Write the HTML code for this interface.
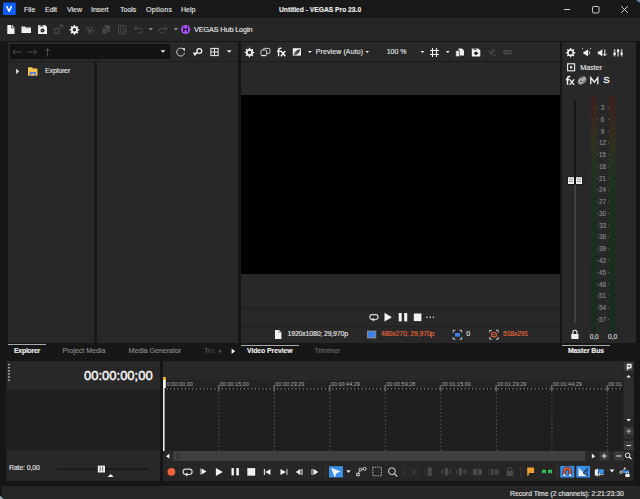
<!DOCTYPE html>
<html><head><meta charset="utf-8">
<style>
*{margin:0;padding:0;box-sizing:border-box}
html,body{width:640px;height:499px;overflow:hidden;background:#161616;font-family:"Liberation Sans",sans-serif;color:#ddd}
.a{position:absolute}
.t{position:absolute;z-index:6;white-space:nowrap;font-size:7px;line-height:8px;-webkit-text-stroke:0.12px currentColor}
svg{position:absolute;overflow:visible;z-index:5}
</style></head><body>
<!-- title bar -->
<div class="a" style="left:0;top:0;width:640px;height:18px;background:#191919"></div>
<svg style="left:0;top:0" width="20" height="18"><rect x="3" y="2.5" width="12.8" height="12.5" rx="1.2" fill="#0d5dff"/><path d="M6.9 6.6l2.2 4.8 2.2-4.8" fill="none" stroke="#fff" stroke-width="1.5" stroke-linecap="round" stroke-linejoin="round"/></svg>
<div class="t" style="left:24px;top:6px;color:#e6e6e6">File</div>
<div class="t" style="left:45px;top:6px;color:#e6e6e6">Edit</div>
<div class="t" style="left:67px;top:6px;color:#e6e6e6">View</div>
<div class="t" style="left:91px;top:6px;color:#e6e6e6">Insert</div>
<div class="t" style="left:120px;top:6px;color:#e6e6e6">Tools</div>
<div class="t" style="left:146px;top:6px;color:#e6e6e6;letter-spacing:0.3px">Options</div>
<div class="t" style="left:181px;top:6px;color:#e6e6e6">Help</div>
<div class="t" style="left:279px;top:6px;color:#f0f0f0;font-weight:bold;font-size:6.7px">Untitled - VEGAS Pro 23.0</div>

<svg style="left:0;top:0" width="640" height="18">
 <path d="M563.8 9.5h6.4" stroke="#e0e0e0" stroke-width="0.9"/>
 <rect x="592.5" y="6.5" width="6.5" height="6.5" rx="1.2" fill="none" stroke="#e0e0e0" stroke-width="0.9"/>
 <path d="M621.2 6.2l6.6 6.6M627.8 6.2l-6.6 6.6" stroke="#e6e6e6" stroke-width="0.9"/>
 <path d="M636 0h4v3z" fill="#7aa0c0" opacity="0.8"/>
</svg>
<!-- toolbar -->
<div class="a" style="left:0;top:18px;width:640px;height:23px;background:#262626"></div>

<!-- toolbar icons -->
<svg style="left:0;top:0" width="640" height="42">
 <!-- new doc -->
 <path d="M7.3 25h4.6l2.6 2.6v6.4h-7.2z" fill="#f2f2f2"/>
 <path d="M11.6 25.2v2.7h2.7" fill="none" stroke="#4a4a4a" stroke-width="0.9"/>
 <!-- folder -->
 <path d="M21.5 26.5h3.5l1 1h5v5.5h-9.5z" fill="#f2f2f2"/>
 <path d="M21.5 28.3h9.5" stroke="#bbb" stroke-width="0.6"/>
 <!-- save -->
 <path d="M38 25h7l2 2v7h-9z" fill="#f2f2f2"/>
 <rect x="39.5" y="25.3" width="4" height="1.2" fill="#333"/>
 <circle cx="42.5" cy="30.5" r="2" fill="#222"/>
 <circle cx="42.5" cy="30.5" r="0.7" fill="#888"/>
 <!-- external (gray) -->
 <rect x="54.5" y="28.5" width="4.5" height="5" fill="none" stroke="#4a4a4a" stroke-width="1"/>
 <path d="M58 29.5l4.5-4.5M59.5 25h3v3" fill="none" stroke="#4a4a4a" stroke-width="1"/>
 <!-- gear -->
 <g transform="translate(74.4,29.8)">
  <path d="M-0.79 -3.61 L-0.58 -4.87 L0.58 -4.87 L0.79 -3.61 L1.99 -3.12 L3.03 -3.85 L3.85 -3.03 L3.12 -1.99 L3.61 -0.79 L4.87 -0.58 L4.87 0.58 L3.61 0.79 L3.12 1.99 L3.85 3.03 L3.03 3.85 L1.99 3.12 L0.79 3.61 L0.58 4.87 L-0.58 4.87 L-0.79 3.61 L-1.99 3.12 L-3.03 3.85 L-3.85 3.03 L-3.12 1.99 L-3.61 0.79 L-4.87 0.58 L-4.87 -0.58 L-3.61 -0.79 L-3.12 -1.99 L-3.85 -3.03 L-3.03 -3.85 L-1.99 -3.12z" fill="#f4f4f4"/>
  <circle r="1.7" fill="#1e1e1e"/><circle r="0.5" fill="#777"/>
 </g>
 <!-- scissors gray -->
 <g stroke="#4d4d4d" stroke-width="1" fill="none">
  <circle cx="87.6" cy="28.8" r="1.2"/><circle cx="89.5" cy="32.5" r="1.2"/>
  <path d="M88.6 29.6l1.6 1.2 4.8-.2M89.8 31.3l1-1.3 1.3-3.6"/>
 </g>
 <!-- copy gray -->
 <path d="M104.6 25h4l1.5 1.5v5.2h-5.5z" fill="#4a4a4a"/>
 <path d="M102 27.8h4l1 1v5.2h-5z" fill="#444" stroke="#262626" stroke-width="0.6"/>
 <!-- clipboard gray -->
 <rect x="118.5" y="25.5" width="7.5" height="8.5" rx="1.5" fill="none" stroke="#4a4a4a" stroke-width="1"/>
 <rect x="120.5" y="27.3" width="3.5" height="5" rx="1" fill="none" stroke="#4a4a4a" stroke-width="0.9"/>
 <!-- undo gray -->
 <path d="M134.5 28.5h6a2.2 2.2 0 0 1 0 4.4h-2.5M136.6 26.5l-2 2 2 2" fill="none" stroke="#4a4a4a" stroke-width="1"/>
 <path d="M148.5 28h4.7l-2.35 2.5z" fill="#8a8a8a"/>
 <!-- redo gray -->
 <path d="M167 28.5h-6a2.2 2.2 0 0 0 0 4.4h2.5M164.9 26.5l2 2-2 2" fill="none" stroke="#4a4a4a" stroke-width="1"/>
 <path d="M173.5 28h4.7l-2.35 2.5z" fill="#8a8a8a"/>
 <!-- H -->
 <circle cx="185.6" cy="29.5" r="4.6" fill="#a452f2"/>
 <path d="M183.8 27v5M187.4 27v5M183.8 29.5h3.6" stroke="#2a1040" stroke-width="1.2"/>
</svg>
<div class="t" style="left:194px;top:25.8px;color:#ececec;font-size:7.3px;letter-spacing:-0.14px">VEGAS Hub Login</div>

<!-- explorer panel -->
<div class="a" style="left:8px;top:42px;width:230px;height:301px;background:#282828"></div>
<div class="a" style="left:10px;top:44px;width:160px;height:15px;background:#131313"></div>
<div class="a" style="left:94px;top:61px;width:2.5px;height:282px;background:#191919"></div>
<div class="a" style="left:8px;top:61px;width:230px;height:1px;background:#1f1f1f"></div>
<svg style="left:0;top:0" width="640" height="100">
 <!-- address arrows -->
 <g stroke="#4a4a4a" stroke-width="1" fill="none">
  <path d="M13 52h9M15.5 49.5L13 52l2.5 2.5"/>
  <path d="M27.5 52h9M34 49.5l2.5 2.5-2.5 2.5"/>
  <path d="M47.5 56.5v-8M45 51l2.5-2.5L50 51"/>
 </g>
 <path d="M160.6 50.2h4.8l-2.4 2.6z" fill="#f0f0f0"/>
 <!-- refresh -->
 <path d="M183.8 49.6A4 4 0 1 0 184.6 52.8" fill="none" stroke="#c8c8c8" stroke-width="1"/>
 <path d="M181.5 48h3.5v3.5z" fill="#c8c8c8"/>
 <!-- search pin -->
 <circle cx="199.3" cy="51" r="2.4" fill="none" stroke="#f0f0f0" stroke-width="1.3"/>
 <path d="M192.8 52.5l4.4 0.3-2.3 3.4z" fill="#f0f0f0"/>
 <path d="M195 53.8l2.7-1.4" stroke="#f0f0f0" stroke-width="1.2"/>
 <!-- grid -->
 <rect x="210.9" y="48.4" width="7.2" height="7.2" fill="none" stroke="#f0f0f0" stroke-width="1"/>
 <path d="M214.5 48.4v7.2M210.9 52h7.2" stroke="#f0f0f0" stroke-width="1"/>
 <path d="M226.8 50.2h4.8l-2.4 2.6z" fill="#f0f0f0"/>
 <!-- tree row -->
 <path d="M16.2 68.7l2.9 2.6-2.9 2.6z" fill="#f4f4f4"/>
 <path d="M28 67.6h4l1 1h4.3v7h-9.3z" fill="#e8a92a"/>
 <path d="M28 68.8h9.3v6.8h-9.3z" fill="#f6c24a"/>
 <path d="M28 67.6h4.4v1.2H28z" fill="#ffd564"/>
 <path d="M30.5 75.8v-3h4.6v3" fill="none" stroke="#4a7cf0" stroke-width="1.5"/>

 <!-- video preview header -->
 <g transform="translate(249.5,52.5)">
  <path d="M-0.79 -3.61 L-0.58 -4.87 L0.58 -4.87 L0.79 -3.61 L1.99 -3.12 L3.03 -3.85 L3.85 -3.03 L3.12 -1.99 L3.61 -0.79 L4.87 -0.58 L4.87 0.58 L3.61 0.79 L3.12 1.99 L3.85 3.03 L3.03 3.85 L1.99 3.12 L0.79 3.61 L0.58 4.87 L-0.58 4.87 L-0.79 3.61 L-1.99 3.12 L-3.03 3.85 L-3.85 3.03 L-3.12 1.99 L-3.61 0.79 L-4.87 0.58 L-4.87 -0.58 L-3.61 -0.79 L-3.12 -1.99 L-3.85 -3.03 L-3.03 -3.85 L-1.99 -3.12z" fill="#f4f4f4"/>
  <circle r="1.7" fill="#1e1e1e"/><circle r="0.5" fill="#777"/>
 </g>
 <rect x="263.3" y="48.4" width="6.6" height="5" rx="1" fill="none" stroke="#d8d8d8" stroke-width="0.9"/>
 <rect x="261" y="50" width="5.6" height="5.6" rx="1" fill="#282828" stroke="#d8d8d8" stroke-width="0.9"/>
 <path d="M262 55.6h3.6" stroke="#fff" stroke-width="1"/>
 <path d="M292.8 48.2h8.2v7.4h-8.2z" fill="#f2f2f2"/>
 <path d="M293.8 55C294.5 51.5 297 49.5 300.3 49.2C299.8 52.5 297.5 54.6 293.8 55z" fill="#1b1b1b"/>
 <path d="M294.6 54.2C296.2 53.2 298 51.4 299.4 50" stroke="#f2f2f2" stroke-width="0.6"/>
 <path d="M307.8 51.1h4.1l-2.05 2z" fill="#f0f0f0"/>
</svg>
<svg style="left:0;top:0" width="640" height="100"><g fill="none" stroke="#f2f2f2" stroke-width="1.4">
 <path d="M278.6 56.3V50.3a2 2 0 0 1 2-2h.8M277 51.2h3.6M280.9 51l4.4 5.3M285.3 51l-4.4 5.3"/></g></svg>
<div class="t" style="left:315.7px;top:48px;color:#e6e6e6;letter-spacing:0.11px">Preview (Auto)</div>
<div class="t" style="left:386.7px;top:48px;color:#e6e6e6">100 %</div>
<svg style="left:0;top:0" width="640" height="100">
 <path d="M365.4 51.1h3.6l-1.8 2z" fill="#f0f0f0"/>
 <path d="M420.4 51.1h4.1l-2.05 2z" fill="#f0f0f0"/>
 <path d="M432.5 48v9M436.5 48v9M430 50.5h9M430 54.5h9" stroke="#f0f0f0" stroke-width="1.1"/>
 <path d="M445.7 51.1h4.1l-2.05 2z" fill="#f0f0f0"/>
 <path d="M458.5 48.5h3.5l2 2v5h-5.5z" fill="#f2f2f2"/>
 <path d="M455.8 50.5h3.5v6.2h-3.5z" fill="#f2f2f2" stroke="#282828" stroke-width="0.7"/>
 <path d="M471.8 48.4h6.5l2 2v6.2h-8.5z" fill="#f2f2f2"/>
 <rect x="473.2" y="48.6" width="3.5" height="1.1" fill="#333"/>
 <circle cx="476" cy="53.2" r="1.8" fill="#222"/>
 <g stroke="#4a4a4a" stroke-width="1" fill="none">
  <path d="M488 50.5c1.5 3 4 4.5 8 5M490.5 55l5-6M492.5 48.5v3M489.5 52h5"/>
 </g>
 <rect x="503.3" y="50" width="8.5" height="4.5" rx="1" fill="#4a4a4a"/>
 <path d="M505 51v2.5M506.8 51v2.5M508.6 51v2.5M510.3 51v2.5" stroke="#282828" stroke-width="0.7"/>
</svg>
<div class="t" style="left:45px;top:67.2px;color:#e6e6e6;letter-spacing:-0.12px">Explorer</div>

<!-- video preview -->
<div class="a" style="left:241px;top:42px;width:319px;height:301px;background:#282828"></div>
<div class="a" style="left:241px;top:95px;width:319px;height:179px;background:#000"></div>

<div class="a" style="left:241px;top:61px;width:319px;height:1px;background:#1c1c1c"></div>
<div class="a" style="left:241px;top:308px;width:319px;height:1px;background:#1f1f1f"></div>
<div class="a" style="left:241px;top:326px;width:319px;height:1px;background:#1f1f1f"></div>
<svg style="left:0;top:0" width="640" height="360">
 <!-- loop -->
 <path d="M372.3 314.6h3.3a2.5 2.5 0 0 1 0 5h-2.2M372.3 319.6a2.5 2.5 0 0 1 0-5" fill="none" stroke="#d8d8d8" stroke-width="1.1"/>
 <path d="M371.3 319.6l2.6-1.8v3.6z" fill="#e8e8e8"/>
 <!-- play -->
 <path d="M384.5 312.8l7.4 4.35-7.4 4.35z" fill="#f2f2f2"/>
 <!-- pause -->
 <rect x="398.7" y="313" width="3" height="8.4" fill="#f2f2f2"/>
 <rect x="404.2" y="313" width="3" height="8.4" fill="#f2f2f2"/>
 <!-- stop -->
 <rect x="413.8" y="313.5" width="7.6" height="7.6" fill="#f2f2f2"/>
 <circle cx="427" cy="317.2" r="0.8" fill="#ddd"/><circle cx="430.2" cy="317.2" r="0.8" fill="#ddd"/><circle cx="433.4" cy="317.2" r="0.8" fill="#ddd"/>
 <!-- doc -->
 <path d="M275 330h4l2.4 2.4v6.6h-6.4z" fill="#f0f0f0"/>
 <path d="M279 330v2.4h2.4" fill="none" stroke="#888" stroke-width="0.6"/>
 <!-- monitor -->
 <rect x="367" y="330.6" width="9.2" height="7.8" fill="#8a8a8a"/>
 <rect x="368" y="331.6" width="7.2" height="5.8" fill="#3b82f0"/>
 <!-- bracket icon 1 -->
 <g fill="none" stroke="#c8c8c8" stroke-width="1">
  <path d="M453.2 332.5v-2.2h2.2M459.5 330.3h2.2v2.2M461.7 337v2.2h-2.2M455.4 339.2h-2.2V337"/>
  <path d="M489.7 332.5v-2.2h2.2M496 330.3h2.2v2.2M498.2 337v2.2h-2.2M491.9 339.2h-2.2V337"/>
 </g>
 <rect x="455" y="333" width="5" height="3.6" fill="#3b82f0"/>
 <rect x="491.6" y="332.5" width="4.8" height="4.4" rx="1.5" fill="none" stroke="#e2653a" stroke-width="1.1"/>
 <path d="M492.6 334.7h2.8" stroke="#e2653a" stroke-width="0.9"/>
</svg>
<div class="t" style="left:287.5px;top:330px;color:#e6e6e6;letter-spacing:-0.19px">1920x1080; 29,970p</div>
<div class="t" style="left:381px;top:330px;color:#e8683e;letter-spacing:-0.17px">480x270; 29,970p</div>
<div class="t" style="left:466.3px;top:330px;color:#e6e6e6">0</div>
<div class="t" style="left:503px;top:330px;color:#e8683e;letter-spacing:-0.23px">518x291</div>
<!-- master -->
<div class="a" style="left:562px;top:42px;width:74px;height:301px;background:#282828"></div>

<div class="a" style="left:636px;top:42px;width:4px;height:301px;background:#141414"></div>
<svg style="left:0;top:0" width="640" height="360">
 <defs><linearGradient id="mg" x1="0" y1="96" x2="0" y2="332" gradientUnits="userSpaceOnUse">
  <stop offset="0" stop-color="#3a201d"/><stop offset="0.08" stop-color="#38261e"/><stop offset="0.19" stop-color="#31301d"/><stop offset="0.3" stop-color="#20331f"/><stop offset="0.45" stop-color="#1a311f"/><stop offset="1" stop-color="#182d1d"/>
 </linearGradient></defs>
 <g transform="translate(570.6,52.7)">
  <path d="M-0.75 -3.42 L-0.55 -4.67 L0.55 -4.67 L0.75 -3.42 L1.89 -2.95 L2.91 -3.69 L3.69 -2.91 L2.95 -1.89 L3.42 -0.75 L4.67 -0.55 L4.67 0.55 L3.42 0.75 L2.95 1.89 L3.69 2.91 L2.91 3.69 L1.89 2.95 L0.75 3.42 L0.55 4.67 L-0.55 4.67 L-0.75 3.42 L-1.89 2.95 L-2.91 3.69 L-3.69 2.91 L-2.95 1.89 L-3.42 0.75 L-4.67 0.55 L-4.67 -0.55 L-3.42 -0.75 L-2.95 -1.89 L-3.69 -2.91 L-2.91 -3.69 L-1.89 -2.95z" fill="#f4f4f4"/>
  <circle r="1.9" fill="#282828"/>
 </g>
 <!-- speaker dots -->
 <path d="M583.5 51.5h1.5l3-2.3v7.3l-3-2.3h-1.5z" fill="#f0f0f0"/>
 <path d="M588.8 51.2a2.2 2.2 0 0 1 0 3.3" fill="none" stroke="#f0f0f0" stroke-width="0.9"/>
 <rect x="582" y="48" width="1" height="1" fill="#ccc"/><rect x="590" y="48" width="1" height="1" fill="#ccc"/>
 <!-- speaker down -->
 <path d="M597.8 51.5h1.5l3-2.3v7.3l-3-2.3h-1.5z" fill="#f0f0f0"/>
 <path d="M604.8 49.5v6M603 53.8l1.8 2 1.8-2" fill="none" stroke="#f0f0f0" stroke-width="1"/>
 <!-- faders -->
 <path d="M614.6 49v7.5M618.1 49v7.5M621.6 49v7.5" stroke="#a8a8a8" stroke-width="1.6"/>
 <rect x="613.6" y="52.6" width="2" height="2.4" fill="#fff"/><rect x="617.1" y="49.6" width="2" height="2.4" fill="#fff"/><rect x="620.6" y="52.4" width="2" height="2.4" fill="#fff"/>
 <!-- master square -->
 <rect x="567.6" y="63.8" width="7" height="7" fill="none" stroke="#f0f0f0" stroke-width="1.1"/>
 <rect x="570" y="66.2" width="2.2" height="2.2" fill="#f0f0f0"/>
 <!-- link -->
 <ellipse cx="582" cy="80.6" rx="5.1" ry="3.6" transform="rotate(-40 582 80.6)" fill="#7e7e7e"/>
 <ellipse cx="584" cy="78.8" rx="2.2" ry="1.3" transform="rotate(-40 584 78.8)" fill="#b0b0b0"/>
 <circle cx="581" cy="81.3" r="1.5" fill="#222" stroke="#f0f0f0" stroke-width="1"/>
 <!-- meters -->
 <rect x="591" y="96" width="6" height="236" fill="url(#mg)"/>
 <rect x="609" y="96" width="6.5" height="236" fill="url(#mg)"/>
 <rect x="597" y="107.10" width="1" height="1" fill="#666"/><rect x="608" y="107.10" width="1" height="1" fill="#666"/><rect x="597" y="118.87" width="1" height="1" fill="#666"/><rect x="608" y="118.87" width="1" height="1" fill="#666"/><rect x="597" y="130.64" width="1" height="1" fill="#666"/><rect x="608" y="130.64" width="1" height="1" fill="#666"/><rect x="597" y="142.41" width="1" height="1" fill="#666"/><rect x="608" y="142.41" width="1" height="1" fill="#666"/><rect x="597" y="154.18" width="1" height="1" fill="#666"/><rect x="608" y="154.18" width="1" height="1" fill="#666"/><rect x="597" y="165.95" width="1" height="1" fill="#666"/><rect x="608" y="165.95" width="1" height="1" fill="#666"/><rect x="597" y="177.72" width="1" height="1" fill="#666"/><rect x="608" y="177.72" width="1" height="1" fill="#666"/><rect x="597" y="189.49" width="1" height="1" fill="#666"/><rect x="608" y="189.49" width="1" height="1" fill="#666"/><rect x="597" y="201.26" width="1" height="1" fill="#666"/><rect x="608" y="201.26" width="1" height="1" fill="#666"/><rect x="597" y="213.03" width="1" height="1" fill="#666"/><rect x="608" y="213.03" width="1" height="1" fill="#666"/><rect x="597" y="224.80" width="1" height="1" fill="#666"/><rect x="608" y="224.80" width="1" height="1" fill="#666"/><rect x="597" y="236.57" width="1" height="1" fill="#666"/><rect x="608" y="236.57" width="1" height="1" fill="#666"/><rect x="597" y="248.34" width="1" height="1" fill="#666"/><rect x="608" y="248.34" width="1" height="1" fill="#666"/><rect x="597" y="260.11" width="1" height="1" fill="#666"/><rect x="608" y="260.11" width="1" height="1" fill="#666"/><rect x="597" y="271.88" width="1" height="1" fill="#666"/><rect x="608" y="271.88" width="1" height="1" fill="#666"/><rect x="597" y="283.65" width="1" height="1" fill="#666"/><rect x="608" y="283.65" width="1" height="1" fill="#666"/><rect x="597" y="295.42" width="1" height="1" fill="#666"/><rect x="608" y="295.42" width="1" height="1" fill="#666"/><rect x="597" y="307.19" width="1" height="1" fill="#666"/><rect x="608" y="307.19" width="1" height="1" fill="#666"/><rect x="597" y="318.96" width="1" height="1" fill="#666"/><rect x="608" y="318.96" width="1" height="1" fill="#666"/>
 <!-- fader -->
 <rect x="574.2" y="100" width="1.8" height="77" fill="#141414"/>
 <rect x="574.2" y="184" width="1.8" height="139" fill="#444"/>
 <rect x="567.4" y="176.6" width="15.2" height="8" fill="#151515"/>
 <rect x="568" y="177.2" width="6" height="6.8" fill="#f4f4f4"/>
 <rect x="576" y="177.2" width="6" height="6.8" fill="#f4f4f4"/>
 <path d="M569.2 179.3h3.6M569.2 181.6h3.6M577.2 179.3h3.6M577.2 181.6h3.6" stroke="#777" stroke-width="0.9"/>
 <!-- lock -->
 <path d="M572.8 334v-1.6a2.1 2.1 0 0 1 4.2 0V334" fill="none" stroke="#f0f0f0" stroke-width="1.1"/>
 <rect x="571.3" y="334" width="7.2" height="5" fill="#f0f0f0"/>
</svg>
<div class="t" style="left:580.2px;top:64px;color:#e6e6e6;font-size:7.2px">Master</div>
<svg style="left:0;top:0" width="640" height="100"><g fill="none" stroke="#f4f4f4" stroke-width="1.5">
 <path d="M567.5 84.8V78.6a2 2 0 0 1 2-2h.8M565.8 79.6h3.6"/></g><path d="M569.6 79.4l4.5 5.4M574.1 79.4l-4.5 5.4" stroke="#f4f4f4" stroke-width="1.3"/></svg>
<svg style="left:0;top:0" width="640" height="100"><path d="M590.8 84.3V77.6l3.5 4.6 3.5-4.6v6.7" fill="none" stroke="#f4f4f4" stroke-width="1.3" stroke-linejoin="miter"/></svg>
<div class="t" style="left:603.2px;top:75.2px;font-size:9.5px;line-height:10px;color:#f4f4f4;-webkit-text-stroke:0.35px #f4f4f4">S</div>
<div class="t" style="left:596px;top:104.00px;width:13px;text-align:center;font-size:6.3px;line-height:7px;color:#8e8e8e;-webkit-text-stroke:0.1px #8e8e8e">3</div>
<div class="t" style="left:596px;top:115.77px;width:13px;text-align:center;font-size:6.3px;line-height:7px;color:#8e8e8e;-webkit-text-stroke:0.1px #8e8e8e">6</div>
<div class="t" style="left:596px;top:127.54px;width:13px;text-align:center;font-size:6.3px;line-height:7px;color:#8e8e8e;-webkit-text-stroke:0.1px #8e8e8e">9</div>
<div class="t" style="left:596px;top:139.31px;width:13px;text-align:center;font-size:6.3px;line-height:7px;color:#8e8e8e;-webkit-text-stroke:0.1px #8e8e8e">12</div>
<div class="t" style="left:596px;top:151.08px;width:13px;text-align:center;font-size:6.3px;line-height:7px;color:#8e8e8e;-webkit-text-stroke:0.1px #8e8e8e">15</div>
<div class="t" style="left:596px;top:162.85px;width:13px;text-align:center;font-size:6.3px;line-height:7px;color:#8e8e8e;-webkit-text-stroke:0.1px #8e8e8e">18</div>
<div class="t" style="left:596px;top:174.62px;width:13px;text-align:center;font-size:6.3px;line-height:7px;color:#8e8e8e;-webkit-text-stroke:0.1px #8e8e8e">21</div>
<div class="t" style="left:596px;top:186.39px;width:13px;text-align:center;font-size:6.3px;line-height:7px;color:#8e8e8e;-webkit-text-stroke:0.1px #8e8e8e">24</div>
<div class="t" style="left:596px;top:198.16px;width:13px;text-align:center;font-size:6.3px;line-height:7px;color:#8e8e8e;-webkit-text-stroke:0.1px #8e8e8e">27</div>
<div class="t" style="left:596px;top:209.93px;width:13px;text-align:center;font-size:6.3px;line-height:7px;color:#8e8e8e;-webkit-text-stroke:0.1px #8e8e8e">30</div>
<div class="t" style="left:596px;top:221.70px;width:13px;text-align:center;font-size:6.3px;line-height:7px;color:#8e8e8e;-webkit-text-stroke:0.1px #8e8e8e">33</div>
<div class="t" style="left:596px;top:233.47px;width:13px;text-align:center;font-size:6.3px;line-height:7px;color:#8e8e8e;-webkit-text-stroke:0.1px #8e8e8e">36</div>
<div class="t" style="left:596px;top:245.24px;width:13px;text-align:center;font-size:6.3px;line-height:7px;color:#8e8e8e;-webkit-text-stroke:0.1px #8e8e8e">39</div>
<div class="t" style="left:596px;top:257.01px;width:13px;text-align:center;font-size:6.3px;line-height:7px;color:#8e8e8e;-webkit-text-stroke:0.1px #8e8e8e">42</div>
<div class="t" style="left:596px;top:268.78px;width:13px;text-align:center;font-size:6.3px;line-height:7px;color:#8e8e8e;-webkit-text-stroke:0.1px #8e8e8e">45</div>
<div class="t" style="left:596px;top:280.55px;width:13px;text-align:center;font-size:6.3px;line-height:7px;color:#8e8e8e;-webkit-text-stroke:0.1px #8e8e8e">48</div>
<div class="t" style="left:596px;top:292.32px;width:13px;text-align:center;font-size:6.3px;line-height:7px;color:#8e8e8e;-webkit-text-stroke:0.1px #8e8e8e">51</div>
<div class="t" style="left:596px;top:304.09px;width:13px;text-align:center;font-size:6.3px;line-height:7px;color:#8e8e8e;-webkit-text-stroke:0.1px #8e8e8e">54</div>
<div class="t" style="left:596px;top:315.86px;width:13px;text-align:center;font-size:6.3px;line-height:7px;color:#8e8e8e;-webkit-text-stroke:0.1px #8e8e8e">57</div>
<div class="t" style="left:589.7px;top:332.5px;color:#ddd;font-size:6.5px">0,0</div>
<div class="t" style="left:608px;top:332.5px;color:#ddd;font-size:6.5px">0,0</div>
<!-- tab row -->
<div class="a" style="left:0;top:343px;width:640px;height:18px;background:#171717"></div>

<div class="a" style="left:8px;top:344px;width:38px;height:1.2px;background:#a8a8a8;z-index:4"></div>
<div class="a" style="left:241px;top:344.5px;width:57.6px;height:1.2px;background:#a8a8a8;z-index:4"></div>
<div class="a" style="left:562px;top:344.5px;width:48px;height:1.2px;background:#a8a8a8;z-index:4"></div>
<div class="t" style="left:14px;top:347px;color:#f0f0f0;font-weight:bold;font-size:6.9px;letter-spacing:-0.25px">Explorer</div>
<div class="t" style="left:62.5px;top:347px;color:#8c8c8c;font-size:7px">Project Media</div>
<div class="t" style="left:128.6px;top:347px;color:#8c8c8c;font-size:7px">Media Generator</div>
<div class="t" style="left:204.3px;top:347px;color:#666;font-size:7px;-webkit-mask-image:linear-gradient(90deg,#000 20%,rgba(0,0,0,.25))">Tra</div>
<div class="t" style="left:247px;top:347px;color:#f0f0f0;font-weight:bold;font-size:6.9px;letter-spacing:-0.08px">Video Preview</div>
<div class="t" style="left:314.4px;top:347px;color:#6a6a6a;font-size:7px">Trimmer</div>
<div class="t" style="left:568px;top:347px;color:#f0f0f0;font-weight:bold;font-size:6.9px;letter-spacing:-0.12px">Master Bus</div>
<svg style="left:0;top:0" width="640" height="499">
 <path d="M221 349v4.3l-3-2.15z" fill="#4e4e4e"/>
 <path d="M231.6 348.6v5.4l3.6-2.7z" fill="#f2f2f2"/>
</svg>
<!-- timeline -->
<div class="a" style="left:6px;top:361px;width:154px;height:28px;background:#282828"></div>
<div class="a" style="left:6px;top:389px;width:154px;height:62px;background:#1f1f1f"></div>
<div class="a" style="left:6px;top:451px;width:154px;height:30px;background:#282828"></div>
<div class="a" style="left:163px;top:361px;width:471px;height:19px;background:#282828"></div>
<div class="a" style="left:163px;top:380px;width:460px;height:10px;background:#232323"></div>
<div class="a" style="left:163px;top:390px;width:460px;height:61px;background:#1f1f1f"></div>
<div class="a" style="left:163px;top:451px;width:471px;height:10px;background:#282828"></div>
<div class="a" style="left:163px;top:461px;width:471px;height:20px;background:#262626"></div>

<div class="a" style="left:6px;top:361px;width:1px;height:120px;background:#202020;z-index:1"></div>
<svg style="left:0;top:0" width="640" height="499">
<rect x="8.2" y="363.9" width="1.5" height="1.4" fill="#cfcfcf"/><rect x="8.2" y="367.0" width="1.5" height="1.4" fill="#cfcfcf"/><rect x="8.2" y="370.1" width="1.5" height="1.4" fill="#cfcfcf"/><rect x="8.2" y="373.2" width="1.5" height="1.4" fill="#cfcfcf"/><rect x="8.2" y="376.3" width="1.5" height="1.4" fill="#cfcfcf"/><rect x="8.2" y="379.4" width="1.5" height="1.4" fill="#cfcfcf"/>
<rect x="165" y="388" width="458" height="2" fill="#161616"/><rect x="166.50" y="388.3" width="1.2" height="1.2" fill="#9a9a9a"/><rect x="170.18" y="388.3" width="1.2" height="1.2" fill="#9a9a9a"/><rect x="173.86" y="388.3" width="1.2" height="1.2" fill="#9a9a9a"/><rect x="177.54" y="388.3" width="1.2" height="1.2" fill="#9a9a9a"/><rect x="181.22" y="388.3" width="1.2" height="1.2" fill="#9a9a9a"/><rect x="184.90" y="388.3" width="1.2" height="1.2" fill="#9a9a9a"/><rect x="188.58" y="388.3" width="1.2" height="1.2" fill="#9a9a9a"/><rect x="192.26" y="388.3" width="1.2" height="1.2" fill="#9a9a9a"/><rect x="195.94" y="388.3" width="1.2" height="1.2" fill="#9a9a9a"/><rect x="199.62" y="388.3" width="1.2" height="1.2" fill="#9a9a9a"/><rect x="203.30" y="388.3" width="1.2" height="1.2" fill="#9a9a9a"/><rect x="206.98" y="388.3" width="1.2" height="1.2" fill="#9a9a9a"/><rect x="210.66" y="388.3" width="1.2" height="1.2" fill="#9a9a9a"/><rect x="214.34" y="388.3" width="1.2" height="1.2" fill="#9a9a9a"/><rect x="218.02" y="388.3" width="1.2" height="1.2" fill="#9a9a9a"/><rect x="221.70" y="388.3" width="1.2" height="1.2" fill="#9a9a9a"/><rect x="225.38" y="388.3" width="1.2" height="1.2" fill="#9a9a9a"/><rect x="229.06" y="388.3" width="1.2" height="1.2" fill="#9a9a9a"/><rect x="232.74" y="388.3" width="1.2" height="1.2" fill="#9a9a9a"/><rect x="236.42" y="388.3" width="1.2" height="1.2" fill="#9a9a9a"/><rect x="240.10" y="388.3" width="1.2" height="1.2" fill="#9a9a9a"/><rect x="243.78" y="388.3" width="1.2" height="1.2" fill="#9a9a9a"/><rect x="247.46" y="388.3" width="1.2" height="1.2" fill="#9a9a9a"/><rect x="251.14" y="388.3" width="1.2" height="1.2" fill="#9a9a9a"/><rect x="254.82" y="388.3" width="1.2" height="1.2" fill="#9a9a9a"/><rect x="258.50" y="388.3" width="1.2" height="1.2" fill="#9a9a9a"/><rect x="262.18" y="388.3" width="1.2" height="1.2" fill="#9a9a9a"/><rect x="265.86" y="388.3" width="1.2" height="1.2" fill="#9a9a9a"/><rect x="269.54" y="388.3" width="1.2" height="1.2" fill="#9a9a9a"/><rect x="273.22" y="388.3" width="1.2" height="1.2" fill="#9a9a9a"/><rect x="276.90" y="388.3" width="1.2" height="1.2" fill="#9a9a9a"/><rect x="280.58" y="388.3" width="1.2" height="1.2" fill="#9a9a9a"/><rect x="284.26" y="388.3" width="1.2" height="1.2" fill="#9a9a9a"/><rect x="287.94" y="388.3" width="1.2" height="1.2" fill="#9a9a9a"/><rect x="291.62" y="388.3" width="1.2" height="1.2" fill="#9a9a9a"/><rect x="295.30" y="388.3" width="1.2" height="1.2" fill="#9a9a9a"/><rect x="298.98" y="388.3" width="1.2" height="1.2" fill="#9a9a9a"/><rect x="302.66" y="388.3" width="1.2" height="1.2" fill="#9a9a9a"/><rect x="306.34" y="388.3" width="1.2" height="1.2" fill="#9a9a9a"/><rect x="310.02" y="388.3" width="1.2" height="1.2" fill="#9a9a9a"/><rect x="313.70" y="388.3" width="1.2" height="1.2" fill="#9a9a9a"/><rect x="317.38" y="388.3" width="1.2" height="1.2" fill="#9a9a9a"/><rect x="321.06" y="388.3" width="1.2" height="1.2" fill="#9a9a9a"/><rect x="324.74" y="388.3" width="1.2" height="1.2" fill="#9a9a9a"/><rect x="328.42" y="388.3" width="1.2" height="1.2" fill="#9a9a9a"/><rect x="332.10" y="388.3" width="1.2" height="1.2" fill="#9a9a9a"/><rect x="335.78" y="388.3" width="1.2" height="1.2" fill="#9a9a9a"/><rect x="339.46" y="388.3" width="1.2" height="1.2" fill="#9a9a9a"/><rect x="343.14" y="388.3" width="1.2" height="1.2" fill="#9a9a9a"/><rect x="346.82" y="388.3" width="1.2" height="1.2" fill="#9a9a9a"/><rect x="350.50" y="388.3" width="1.2" height="1.2" fill="#9a9a9a"/><rect x="354.18" y="388.3" width="1.2" height="1.2" fill="#9a9a9a"/><rect x="357.86" y="388.3" width="1.2" height="1.2" fill="#9a9a9a"/><rect x="361.54" y="388.3" width="1.2" height="1.2" fill="#9a9a9a"/><rect x="365.22" y="388.3" width="1.2" height="1.2" fill="#9a9a9a"/><rect x="368.90" y="388.3" width="1.2" height="1.2" fill="#9a9a9a"/><rect x="372.58" y="388.3" width="1.2" height="1.2" fill="#9a9a9a"/><rect x="376.26" y="388.3" width="1.2" height="1.2" fill="#9a9a9a"/><rect x="379.94" y="388.3" width="1.2" height="1.2" fill="#9a9a9a"/><rect x="383.62" y="388.3" width="1.2" height="1.2" fill="#9a9a9a"/><rect x="387.30" y="388.3" width="1.2" height="1.2" fill="#9a9a9a"/><rect x="390.98" y="388.3" width="1.2" height="1.2" fill="#9a9a9a"/><rect x="394.66" y="388.3" width="1.2" height="1.2" fill="#9a9a9a"/><rect x="398.34" y="388.3" width="1.2" height="1.2" fill="#9a9a9a"/><rect x="402.02" y="388.3" width="1.2" height="1.2" fill="#9a9a9a"/><rect x="405.70" y="388.3" width="1.2" height="1.2" fill="#9a9a9a"/><rect x="409.38" y="388.3" width="1.2" height="1.2" fill="#9a9a9a"/><rect x="413.06" y="388.3" width="1.2" height="1.2" fill="#9a9a9a"/><rect x="416.74" y="388.3" width="1.2" height="1.2" fill="#9a9a9a"/><rect x="420.42" y="388.3" width="1.2" height="1.2" fill="#9a9a9a"/><rect x="424.10" y="388.3" width="1.2" height="1.2" fill="#9a9a9a"/><rect x="427.78" y="388.3" width="1.2" height="1.2" fill="#9a9a9a"/><rect x="431.46" y="388.3" width="1.2" height="1.2" fill="#9a9a9a"/><rect x="435.14" y="388.3" width="1.2" height="1.2" fill="#9a9a9a"/><rect x="438.82" y="388.3" width="1.2" height="1.2" fill="#9a9a9a"/><rect x="442.50" y="388.3" width="1.2" height="1.2" fill="#9a9a9a"/><rect x="446.18" y="388.3" width="1.2" height="1.2" fill="#9a9a9a"/><rect x="449.86" y="388.3" width="1.2" height="1.2" fill="#9a9a9a"/><rect x="453.54" y="388.3" width="1.2" height="1.2" fill="#9a9a9a"/><rect x="457.22" y="388.3" width="1.2" height="1.2" fill="#9a9a9a"/><rect x="460.90" y="388.3" width="1.2" height="1.2" fill="#9a9a9a"/><rect x="464.58" y="388.3" width="1.2" height="1.2" fill="#9a9a9a"/><rect x="468.26" y="388.3" width="1.2" height="1.2" fill="#9a9a9a"/><rect x="471.94" y="388.3" width="1.2" height="1.2" fill="#9a9a9a"/><rect x="475.62" y="388.3" width="1.2" height="1.2" fill="#9a9a9a"/><rect x="479.30" y="388.3" width="1.2" height="1.2" fill="#9a9a9a"/><rect x="482.98" y="388.3" width="1.2" height="1.2" fill="#9a9a9a"/><rect x="486.66" y="388.3" width="1.2" height="1.2" fill="#9a9a9a"/><rect x="490.34" y="388.3" width="1.2" height="1.2" fill="#9a9a9a"/><rect x="494.02" y="388.3" width="1.2" height="1.2" fill="#9a9a9a"/><rect x="497.70" y="388.3" width="1.2" height="1.2" fill="#9a9a9a"/><rect x="501.38" y="388.3" width="1.2" height="1.2" fill="#9a9a9a"/><rect x="505.06" y="388.3" width="1.2" height="1.2" fill="#9a9a9a"/><rect x="508.74" y="388.3" width="1.2" height="1.2" fill="#9a9a9a"/><rect x="512.42" y="388.3" width="1.2" height="1.2" fill="#9a9a9a"/><rect x="516.10" y="388.3" width="1.2" height="1.2" fill="#9a9a9a"/><rect x="519.78" y="388.3" width="1.2" height="1.2" fill="#9a9a9a"/><rect x="523.46" y="388.3" width="1.2" height="1.2" fill="#9a9a9a"/><rect x="527.14" y="388.3" width="1.2" height="1.2" fill="#9a9a9a"/><rect x="530.82" y="388.3" width="1.2" height="1.2" fill="#9a9a9a"/><rect x="534.50" y="388.3" width="1.2" height="1.2" fill="#9a9a9a"/><rect x="538.18" y="388.3" width="1.2" height="1.2" fill="#9a9a9a"/><rect x="541.86" y="388.3" width="1.2" height="1.2" fill="#9a9a9a"/><rect x="545.54" y="388.3" width="1.2" height="1.2" fill="#9a9a9a"/><rect x="549.22" y="388.3" width="1.2" height="1.2" fill="#9a9a9a"/><rect x="552.90" y="388.3" width="1.2" height="1.2" fill="#9a9a9a"/><rect x="556.58" y="388.3" width="1.2" height="1.2" fill="#9a9a9a"/><rect x="560.26" y="388.3" width="1.2" height="1.2" fill="#9a9a9a"/><rect x="563.94" y="388.3" width="1.2" height="1.2" fill="#9a9a9a"/><rect x="567.62" y="388.3" width="1.2" height="1.2" fill="#9a9a9a"/><rect x="571.30" y="388.3" width="1.2" height="1.2" fill="#9a9a9a"/><rect x="574.98" y="388.3" width="1.2" height="1.2" fill="#9a9a9a"/><rect x="578.66" y="388.3" width="1.2" height="1.2" fill="#9a9a9a"/><rect x="582.34" y="388.3" width="1.2" height="1.2" fill="#9a9a9a"/><rect x="586.02" y="388.3" width="1.2" height="1.2" fill="#9a9a9a"/><rect x="589.70" y="388.3" width="1.2" height="1.2" fill="#9a9a9a"/><rect x="593.38" y="388.3" width="1.2" height="1.2" fill="#9a9a9a"/><rect x="597.06" y="388.3" width="1.2" height="1.2" fill="#9a9a9a"/><rect x="600.74" y="388.3" width="1.2" height="1.2" fill="#9a9a9a"/><rect x="604.42" y="388.3" width="1.2" height="1.2" fill="#9a9a9a"/><rect x="608.10" y="388.3" width="1.2" height="1.2" fill="#9a9a9a"/><rect x="611.78" y="388.3" width="1.2" height="1.2" fill="#9a9a9a"/><rect x="615.46" y="388.3" width="1.2" height="1.2" fill="#9a9a9a"/><rect x="619.14" y="388.3" width="1.2" height="1.2" fill="#9a9a9a"/>
<rect x="217.8" y="385" width="1.8" height="6.5" fill="#606060"/><rect x="218.3" y="394.0" width="1.2" height="1.2" fill="#5a5a5a"/><rect x="218.3" y="397.7" width="1.2" height="1.2" fill="#5a5a5a"/><rect x="218.3" y="401.4" width="1.2" height="1.2" fill="#5a5a5a"/><rect x="218.3" y="405.1" width="1.2" height="1.2" fill="#5a5a5a"/><rect x="218.3" y="408.8" width="1.2" height="1.2" fill="#5a5a5a"/><rect x="218.3" y="412.5" width="1.2" height="1.2" fill="#5a5a5a"/><rect x="218.3" y="416.2" width="1.2" height="1.2" fill="#5a5a5a"/><rect x="218.3" y="419.9" width="1.2" height="1.2" fill="#5a5a5a"/><rect x="218.3" y="423.6" width="1.2" height="1.2" fill="#5a5a5a"/><rect x="218.3" y="427.3" width="1.2" height="1.2" fill="#5a5a5a"/><rect x="218.3" y="431.0" width="1.2" height="1.2" fill="#5a5a5a"/><rect x="218.3" y="434.7" width="1.2" height="1.2" fill="#5a5a5a"/><rect x="218.3" y="438.4" width="1.2" height="1.2" fill="#5a5a5a"/><rect x="218.3" y="442.1" width="1.2" height="1.2" fill="#5a5a5a"/><rect x="218.3" y="445.8" width="1.2" height="1.2" fill="#5a5a5a"/><rect x="218.3" y="449.5" width="1.2" height="1.2" fill="#5a5a5a"/><rect x="273.3" y="385" width="1.8" height="6.5" fill="#606060"/><rect x="273.8" y="394.0" width="1.2" height="1.2" fill="#5a5a5a"/><rect x="273.8" y="397.7" width="1.2" height="1.2" fill="#5a5a5a"/><rect x="273.8" y="401.4" width="1.2" height="1.2" fill="#5a5a5a"/><rect x="273.8" y="405.1" width="1.2" height="1.2" fill="#5a5a5a"/><rect x="273.8" y="408.8" width="1.2" height="1.2" fill="#5a5a5a"/><rect x="273.8" y="412.5" width="1.2" height="1.2" fill="#5a5a5a"/><rect x="273.8" y="416.2" width="1.2" height="1.2" fill="#5a5a5a"/><rect x="273.8" y="419.9" width="1.2" height="1.2" fill="#5a5a5a"/><rect x="273.8" y="423.6" width="1.2" height="1.2" fill="#5a5a5a"/><rect x="273.8" y="427.3" width="1.2" height="1.2" fill="#5a5a5a"/><rect x="273.8" y="431.0" width="1.2" height="1.2" fill="#5a5a5a"/><rect x="273.8" y="434.7" width="1.2" height="1.2" fill="#5a5a5a"/><rect x="273.8" y="438.4" width="1.2" height="1.2" fill="#5a5a5a"/><rect x="273.8" y="442.1" width="1.2" height="1.2" fill="#5a5a5a"/><rect x="273.8" y="445.8" width="1.2" height="1.2" fill="#5a5a5a"/><rect x="273.8" y="449.5" width="1.2" height="1.2" fill="#5a5a5a"/><rect x="328.8" y="385" width="1.8" height="6.5" fill="#606060"/><rect x="329.3" y="394.0" width="1.2" height="1.2" fill="#5a5a5a"/><rect x="329.3" y="397.7" width="1.2" height="1.2" fill="#5a5a5a"/><rect x="329.3" y="401.4" width="1.2" height="1.2" fill="#5a5a5a"/><rect x="329.3" y="405.1" width="1.2" height="1.2" fill="#5a5a5a"/><rect x="329.3" y="408.8" width="1.2" height="1.2" fill="#5a5a5a"/><rect x="329.3" y="412.5" width="1.2" height="1.2" fill="#5a5a5a"/><rect x="329.3" y="416.2" width="1.2" height="1.2" fill="#5a5a5a"/><rect x="329.3" y="419.9" width="1.2" height="1.2" fill="#5a5a5a"/><rect x="329.3" y="423.6" width="1.2" height="1.2" fill="#5a5a5a"/><rect x="329.3" y="427.3" width="1.2" height="1.2" fill="#5a5a5a"/><rect x="329.3" y="431.0" width="1.2" height="1.2" fill="#5a5a5a"/><rect x="329.3" y="434.7" width="1.2" height="1.2" fill="#5a5a5a"/><rect x="329.3" y="438.4" width="1.2" height="1.2" fill="#5a5a5a"/><rect x="329.3" y="442.1" width="1.2" height="1.2" fill="#5a5a5a"/><rect x="329.3" y="445.8" width="1.2" height="1.2" fill="#5a5a5a"/><rect x="329.3" y="449.5" width="1.2" height="1.2" fill="#5a5a5a"/><rect x="384.3" y="385" width="1.8" height="6.5" fill="#606060"/><rect x="384.8" y="394.0" width="1.2" height="1.2" fill="#5a5a5a"/><rect x="384.8" y="397.7" width="1.2" height="1.2" fill="#5a5a5a"/><rect x="384.8" y="401.4" width="1.2" height="1.2" fill="#5a5a5a"/><rect x="384.8" y="405.1" width="1.2" height="1.2" fill="#5a5a5a"/><rect x="384.8" y="408.8" width="1.2" height="1.2" fill="#5a5a5a"/><rect x="384.8" y="412.5" width="1.2" height="1.2" fill="#5a5a5a"/><rect x="384.8" y="416.2" width="1.2" height="1.2" fill="#5a5a5a"/><rect x="384.8" y="419.9" width="1.2" height="1.2" fill="#5a5a5a"/><rect x="384.8" y="423.6" width="1.2" height="1.2" fill="#5a5a5a"/><rect x="384.8" y="427.3" width="1.2" height="1.2" fill="#5a5a5a"/><rect x="384.8" y="431.0" width="1.2" height="1.2" fill="#5a5a5a"/><rect x="384.8" y="434.7" width="1.2" height="1.2" fill="#5a5a5a"/><rect x="384.8" y="438.4" width="1.2" height="1.2" fill="#5a5a5a"/><rect x="384.8" y="442.1" width="1.2" height="1.2" fill="#5a5a5a"/><rect x="384.8" y="445.8" width="1.2" height="1.2" fill="#5a5a5a"/><rect x="384.8" y="449.5" width="1.2" height="1.2" fill="#5a5a5a"/><rect x="439.8" y="385" width="1.8" height="6.5" fill="#606060"/><rect x="440.3" y="394.0" width="1.2" height="1.2" fill="#5a5a5a"/><rect x="440.3" y="397.7" width="1.2" height="1.2" fill="#5a5a5a"/><rect x="440.3" y="401.4" width="1.2" height="1.2" fill="#5a5a5a"/><rect x="440.3" y="405.1" width="1.2" height="1.2" fill="#5a5a5a"/><rect x="440.3" y="408.8" width="1.2" height="1.2" fill="#5a5a5a"/><rect x="440.3" y="412.5" width="1.2" height="1.2" fill="#5a5a5a"/><rect x="440.3" y="416.2" width="1.2" height="1.2" fill="#5a5a5a"/><rect x="440.3" y="419.9" width="1.2" height="1.2" fill="#5a5a5a"/><rect x="440.3" y="423.6" width="1.2" height="1.2" fill="#5a5a5a"/><rect x="440.3" y="427.3" width="1.2" height="1.2" fill="#5a5a5a"/><rect x="440.3" y="431.0" width="1.2" height="1.2" fill="#5a5a5a"/><rect x="440.3" y="434.7" width="1.2" height="1.2" fill="#5a5a5a"/><rect x="440.3" y="438.4" width="1.2" height="1.2" fill="#5a5a5a"/><rect x="440.3" y="442.1" width="1.2" height="1.2" fill="#5a5a5a"/><rect x="440.3" y="445.8" width="1.2" height="1.2" fill="#5a5a5a"/><rect x="440.3" y="449.5" width="1.2" height="1.2" fill="#5a5a5a"/><rect x="495.3" y="385" width="1.8" height="6.5" fill="#606060"/><rect x="495.8" y="394.0" width="1.2" height="1.2" fill="#5a5a5a"/><rect x="495.8" y="397.7" width="1.2" height="1.2" fill="#5a5a5a"/><rect x="495.8" y="401.4" width="1.2" height="1.2" fill="#5a5a5a"/><rect x="495.8" y="405.1" width="1.2" height="1.2" fill="#5a5a5a"/><rect x="495.8" y="408.8" width="1.2" height="1.2" fill="#5a5a5a"/><rect x="495.8" y="412.5" width="1.2" height="1.2" fill="#5a5a5a"/><rect x="495.8" y="416.2" width="1.2" height="1.2" fill="#5a5a5a"/><rect x="495.8" y="419.9" width="1.2" height="1.2" fill="#5a5a5a"/><rect x="495.8" y="423.6" width="1.2" height="1.2" fill="#5a5a5a"/><rect x="495.8" y="427.3" width="1.2" height="1.2" fill="#5a5a5a"/><rect x="495.8" y="431.0" width="1.2" height="1.2" fill="#5a5a5a"/><rect x="495.8" y="434.7" width="1.2" height="1.2" fill="#5a5a5a"/><rect x="495.8" y="438.4" width="1.2" height="1.2" fill="#5a5a5a"/><rect x="495.8" y="442.1" width="1.2" height="1.2" fill="#5a5a5a"/><rect x="495.8" y="445.8" width="1.2" height="1.2" fill="#5a5a5a"/><rect x="495.8" y="449.5" width="1.2" height="1.2" fill="#5a5a5a"/><rect x="550.8" y="385" width="1.8" height="6.5" fill="#606060"/><rect x="551.3" y="394.0" width="1.2" height="1.2" fill="#5a5a5a"/><rect x="551.3" y="397.7" width="1.2" height="1.2" fill="#5a5a5a"/><rect x="551.3" y="401.4" width="1.2" height="1.2" fill="#5a5a5a"/><rect x="551.3" y="405.1" width="1.2" height="1.2" fill="#5a5a5a"/><rect x="551.3" y="408.8" width="1.2" height="1.2" fill="#5a5a5a"/><rect x="551.3" y="412.5" width="1.2" height="1.2" fill="#5a5a5a"/><rect x="551.3" y="416.2" width="1.2" height="1.2" fill="#5a5a5a"/><rect x="551.3" y="419.9" width="1.2" height="1.2" fill="#5a5a5a"/><rect x="551.3" y="423.6" width="1.2" height="1.2" fill="#5a5a5a"/><rect x="551.3" y="427.3" width="1.2" height="1.2" fill="#5a5a5a"/><rect x="551.3" y="431.0" width="1.2" height="1.2" fill="#5a5a5a"/><rect x="551.3" y="434.7" width="1.2" height="1.2" fill="#5a5a5a"/><rect x="551.3" y="438.4" width="1.2" height="1.2" fill="#5a5a5a"/><rect x="551.3" y="442.1" width="1.2" height="1.2" fill="#5a5a5a"/><rect x="551.3" y="445.8" width="1.2" height="1.2" fill="#5a5a5a"/><rect x="551.3" y="449.5" width="1.2" height="1.2" fill="#5a5a5a"/><rect x="606.3" y="385" width="1.8" height="6.5" fill="#606060"/><rect x="606.8" y="394.0" width="1.2" height="1.2" fill="#5a5a5a"/><rect x="606.8" y="397.7" width="1.2" height="1.2" fill="#5a5a5a"/><rect x="606.8" y="401.4" width="1.2" height="1.2" fill="#5a5a5a"/><rect x="606.8" y="405.1" width="1.2" height="1.2" fill="#5a5a5a"/><rect x="606.8" y="408.8" width="1.2" height="1.2" fill="#5a5a5a"/><rect x="606.8" y="412.5" width="1.2" height="1.2" fill="#5a5a5a"/><rect x="606.8" y="416.2" width="1.2" height="1.2" fill="#5a5a5a"/><rect x="606.8" y="419.9" width="1.2" height="1.2" fill="#5a5a5a"/><rect x="606.8" y="423.6" width="1.2" height="1.2" fill="#5a5a5a"/><rect x="606.8" y="427.3" width="1.2" height="1.2" fill="#5a5a5a"/><rect x="606.8" y="431.0" width="1.2" height="1.2" fill="#5a5a5a"/><rect x="606.8" y="434.7" width="1.2" height="1.2" fill="#5a5a5a"/><rect x="606.8" y="438.4" width="1.2" height="1.2" fill="#5a5a5a"/><rect x="606.8" y="442.1" width="1.2" height="1.2" fill="#5a5a5a"/><rect x="606.8" y="445.8" width="1.2" height="1.2" fill="#5a5a5a"/><rect x="606.8" y="449.5" width="1.2" height="1.2" fill="#5a5a5a"/>
<path d="M163 376.9h3.2l-.7 1.5.7 1.6H163z" fill="#f2c12e"/><rect x="163" y="380" width="2.8" height="8" fill="#f4f4f4"/><rect x="163" y="388" width="1.6" height="63" fill="#e8e8e8"/></svg>
<div class="a" style="left:163px;top:0;width:459px;height:499px;overflow:hidden;z-index:6">
<div class="t" style="left:3.75px;top:381px;font-size:5.5px;line-height:6px;color:#a8a8a8;-webkit-text-stroke:0">0:00:00;00</div>
<div class="t" style="left:56.80px;top:381px;font-size:5.5px;line-height:6px;color:#a8a8a8;-webkit-text-stroke:0">00:00:15;00</div>
<div class="t" style="left:112.30px;top:381px;font-size:5.5px;line-height:6px;color:#a8a8a8;-webkit-text-stroke:0">00:00:29;29</div>
<div class="t" style="left:167.80px;top:381px;font-size:5.5px;line-height:6px;color:#a8a8a8;-webkit-text-stroke:0">00:00:44;29</div>
<div class="t" style="left:223.30px;top:381px;font-size:5.5px;line-height:6px;color:#a8a8a8;-webkit-text-stroke:0">00:00:59;28</div>
<div class="t" style="left:278.80px;top:381px;font-size:5.5px;line-height:6px;color:#a8a8a8;-webkit-text-stroke:0">00:01:15;00</div>
<div class="t" style="left:334.30px;top:381px;font-size:5.5px;line-height:6px;color:#a8a8a8;-webkit-text-stroke:0">00:01:29;29</div>
<div class="t" style="left:389.80px;top:381px;font-size:5.5px;line-height:6px;color:#a8a8a8;-webkit-text-stroke:0">00:01:44;29</div>
<div class="t" style="left:445.30px;top:381px;font-size:5.5px;line-height:6px;color:#a8a8a8;-webkit-text-stroke:0">00:01:59;28</div>
</div>
<div class="t" style="left:84px;top:369px;font-size:13px;line-height:14px;color:#f8f8f8;-webkit-text-stroke:0.45px #f8f8f8">00:00:00;00</div>
<svg style="left:0;top:0" width="640" height="499">
 <!-- scrollbar -->
 <rect x="163" y="451" width="10.5" height="10" fill="#282828"/>
 <rect x="173.5" y="451" width="412" height="10" fill="#404040"/>
 <path d="M169.4 453.8v4.7l-3.4-2.35z" fill="#f2f2f2"/>
 <rect x="177.6" y="453.2" width="1.2" height="6" fill="#2c2c2c"/>
 <rect x="585" y="453.5" width="1" height="6" fill="#2c2c2c"/>
 <rect x="586.5" y="451" width="47" height="10" fill="#282828"/>
 <path d="M591.9 453.8v4.7l3.4-2.35z" fill="#f2f2f2"/>
 <rect x="599.6" y="451.6" width="9.2" height="9" fill="#3a3a3a"/>
 <path d="M604.2 453.5v5M601.7 456h5" stroke="#e8e8e8" stroke-width="1"/>
 <rect x="613.8" y="451.6" width="10" height="9" fill="#3a3a3a"/>
 <path d="M616.3 456h5" stroke="#e8e8e8" stroke-width="1"/>
 <circle cx="627.6" cy="455.3" r="2.3" fill="none" stroke="#f0f0f0" stroke-width="1"/>
 <path d="M629.3 457l2.2 2.2" stroke="#f0f0f0" stroke-width="1.2"/>
 <!-- vscroll -->
 <rect x="623" y="361" width="11" height="90" fill="#262626"/>
 <rect x="624" y="362" width="9.5" height="9" fill="#3a3a3a"/>
 <rect x="626.8" y="363.8" width="4.8" height="4.8" rx="1" fill="#f0f0f0"/>
 <circle cx="629.2" cy="366.2" r="0.9" fill="#1a1a1a"/>
 <path d="M626.8 367.5v3.2l2.4-2.2z" fill="#f0f0f0"/>
 <path d="M626.3 377.4h4.6l-2.3-2.4z" fill="#f0f0f0"/>
 <rect x="624" y="378.5" width="9.5" height="40" fill="#2e2e2e"/>
 <path d="M626.3 419h4.6l-2.3 2.6z" fill="#f0f0f0"/>
 <rect x="624" y="427" width="9.5" height="8.5" fill="#3a3a3a"/>
 <path d="M628.7 429v4.5M626.5 431.2h4.5" stroke="#bbb" stroke-width="0.9"/>
 <rect x="624" y="437" width="9.5" height="1" fill="#3a3a3a"/>
 <rect x="624" y="441" width="9.5" height="9" fill="#3a3a3a"/>
 <path d="M626.5 445.5h4.5" stroke="#e0e0e0" stroke-width="1"/>
 <!-- transport -->
 <circle cx="171.4" cy="471.8" r="3.9" fill="#f0643c"/>
 <path d="M185.8 469.1h3.6a2.7 2.7 0 0 1 0 5.4h-2.4M185.8 474.5a2.7 2.7 0 0 1 0-5.4" fill="none" stroke="#d8d8d8" stroke-width="1.1"/>
 <path d="M184.8 474.5l2.7-1.9v3.8z" fill="#e8e8e8"/>
 <rect x="199.9" y="468.6" width="1.6" height="6" fill="#8a8a8a"/>
 <path d="M201.6 468.6l4.9 3-4.9 3z" fill="#f2f2f2"/>
 <path d="M215.9 467.9l7 4.05-7 4.05z" fill="#f2f2f2"/>
 <rect x="231.5" y="468.1" width="2.4" height="7.3" fill="#f2f2f2"/>
 <rect x="236.3" y="468.1" width="2.6" height="7.3" fill="#f2f2f2"/>
 <rect x="247.3" y="468.1" width="7.9" height="7.6" fill="#f0f0f0"/>
 <rect x="263.8" y="469" width="1.3" height="6" fill="#cfcfcf"/><path d="M270.5 469v6l-5.2-3z" fill="#f0f0f0"/>
 <path d="M280.5 469v6l5.4-3z" fill="#f0f0f0"/><rect x="286.2" y="469" width="1.5" height="6" fill="#9a9a9a"/>
 <path d="M300.2 469v6l-4.4-3z" fill="#f0f0f0"/><rect x="300.2" y="469" width="2.8" height="6" fill="#8a8a8a"/>
 <rect x="311" y="469" width="2.8" height="6" fill="#8a8a8a"/><path d="M313.8 469v6l4.5-3z" fill="#f0f0f0"/>
 <rect x="325.2" y="466.7" width="1" height="10.2" fill="#3a3a3a"/>
 <rect x="329" y="466.2" width="14" height="11.2" fill="#3a8ee6"/>
 <path d="M331.6 468.3L340.3 471.6 336.3 472.9 334.8 477z" fill="#f4f4f4" stroke="#f4f4f4" stroke-width="0.5" stroke-linejoin="round"/>
 <path d="M346.2 470.3h4.5l-2.25 2.6z" fill="#e8e8e8"/>
 <g fill="none" stroke="#e0e0e0" stroke-width="0.9">
  <rect x="356.8" y="473.3" width="2.4" height="2.4"/><circle cx="360.3" cy="469.6" r="1.4"/><circle cx="364.6" cy="468.8" r="1.5"/>
  <path d="M358.3 473.2l1.3-2.3M361.7 469.4l1.4-.3"/>
 </g>
 <rect x="372.8" y="467.2" width="8.6" height="8.6" fill="none" stroke="#d0d0d0" stroke-width="0.9" stroke-dasharray="1.2 1"/>
 <circle cx="391.9" cy="471.2" r="3.4" fill="none" stroke="#e0e0e0" stroke-width="1"/>
 <path d="M394.3 473.6l3 3" stroke="#e0e0e0" stroke-width="1.1"/>
 <rect x="403.3" y="466.4" width="1" height="10.4" fill="#3a3a3a"/>
 <path d="M410.8 468.3l6.5 7.2M417.3 468.3l-6.5 7.2" stroke="#464646" stroke-width="0.9"/>
 <g fill="#4a4a4a">
  <rect x="427.8" y="467.5" width="4" height="8.5"/><path d="M425.7 468.5v6.5M433.9 468.5v6.5" stroke="#3c3c3c" stroke-width="0.8"/>
  <rect x="445" y="468" width="3" height="7.5"/><rect x="441" y="469.5" width="3" height="4.5" fill="#3c3c3c"/><rect x="449" y="469.5" width="2" height="4.5" fill="#3c3c3c"/>
  <rect x="459" y="468" width="3" height="7.5"/><rect x="456.3" y="469.5" width="2" height="4.5" fill="#3c3c3c"/><rect x="463" y="469.5" width="3.5" height="4.5" fill="#3c3c3c"/>
  <rect x="473" y="469" width="3.5" height="6"/><rect x="478.5" y="469" width="3.5" height="6"/><rect x="477" y="467.5" width="1" height="9" fill="#3c3c3c"/>
  <rect x="491" y="469" width="2.5" height="6"/><rect x="495" y="469" width="2.5" height="6"/><path d="M489 468.5v7M498.5 468.5v7" stroke="#3c3c3c" stroke-width="0.8"/>
  <path d="M507.8 471v-1.6a2 2 0 0 1 4 0V471" fill="none" stroke="#4a4a4a" stroke-width="1"/><rect x="506.5" y="471" width="6.7" height="5"/>
 </g>
 <rect x="520.3" y="466.5" width="1" height="10.5" fill="#3a3a3a"/>
 <path d="M527.2 467.5h6.9v5.4h-5.3v2.5h-1.6z" fill="#f0a030"/>
 <path d="M542 469.8h4v3.9l-2-1.2-2 1.2zM548 469.8h4v3.9l-2-1.2-2 1.2z" fill="#2ec050"/>
 <rect x="557" y="466.5" width="1" height="10.5" fill="#3a3a3a"/>
 <rect x="560.3" y="465.9" width="14" height="11.7" fill="#3a8ee6"/>
 <path d="M564.4 474.8v-3.6a2.9 2.9 0 0 1 5.8 0v3.6" fill="none" stroke="#1a2a40" stroke-width="3.4"/>
 <path d="M564.4 474.5v-3.3a2.9 2.9 0 0 1 5.8 0v3.3" fill="none" stroke="#f05a28" stroke-width="2"/>
 <rect x="563.4" y="474.2" width="2" height="1.8" fill="#f4f4f4"/><rect x="569.2" y="474.2" width="2" height="1.8" fill="#f4f4f4"/>
 <rect x="576.3" y="465.9" width="13.7" height="11.7" fill="#3a8ee6"/>
 <path d="M578.6 467.8v8.3h8.7z" fill="#f2f0ee"/>
 <path d="M587.6 467.8l-4.5 5.2 4.5 3.1z" fill="#1e4a7a"/>
 <path d="M587.6 467.8l-4.5 5.2 4.5 3.1" fill="none" stroke="#1a2a40" stroke-width="0.8"/>
 <path d="M586.5 471l-1.8 2 1.8 1.2z" fill="#3a8ee6"/>
 <path d="M594.8 469.5h1.5l1.6-1.2v8.4l-1.6-1.2h-1.5z" fill="#ececec"/>
 <rect x="598.3" y="469.2" width="5.5" height="4.6" fill="#3a8ee6"/>
 <path d="M598.3 474.6h5.5" stroke="#cfcfcf" stroke-width="0.8"/>
 <path d="M599.8 473l-1 1.8 1 1.5" fill="none" stroke="#ececec" stroke-width="0.8"/>
 <path d="M609.6 469.6h4.8l-2.4 3z" fill="#ececec"/>
 <circle cx="621" cy="472.3" r="1.2" fill="none" stroke="#e6e6e6" stroke-width="0.9"/>
 <circle cx="624.8" cy="468.6" r="1" fill="#e6e6e6"/>
 <path d="M621.6 471.2l2.6-2" stroke="#ccc" stroke-width="0.7"/>
 <path d="M623 470.3h6v2.8h-6z" fill="#3a8ee6"/>
 <path d="M626.2 474v-.6a1.3 1.3 0 0 1 2.6 0v.6" fill="none" stroke="#f0f0f0" stroke-width="0.8"/>
 <rect x="625.4" y="474" width="4.2" height="3" fill="#f0f0f0"/>
 <!-- rate slider -->
 <rect x="57.7" y="468.6" width="91" height="1" fill="#121212"/>
 <rect x="97.3" y="465.1" width="8.2" height="7.8" fill="#1a1a1a"/>
 <rect x="97.8" y="465.6" width="7.2" height="6.9" fill="#f2f2f2"/>
 <path d="M100.2 466.8v4.4M102.6 466.8v4.4" stroke="#555" stroke-width="0.9"/>
 <path d="M107.6 477h6l-3-3.1z" fill="#f0f0f0"/>
</svg>
<div class="t" style="left:9px;top:463.8px;color:#e6e6e6;font-size:7px;letter-spacing:-0.17px">Rate: 0,00</div>
<svg style="left:0;top:0" width="640" height="499"><path d="M0 495.5L3.5 499H0z" fill="#8ea8bc"/></svg>
<!-- status -->
<div class="a" style="left:2px;top:486px;width:638px;height:13px;background:#262626"></div>
<div class="t" style="left:510px;top:490px;color:#e6e6e6;font-size:6.8px">Record Time (2 channels): 2:21:23:30</div>
</body></html>
